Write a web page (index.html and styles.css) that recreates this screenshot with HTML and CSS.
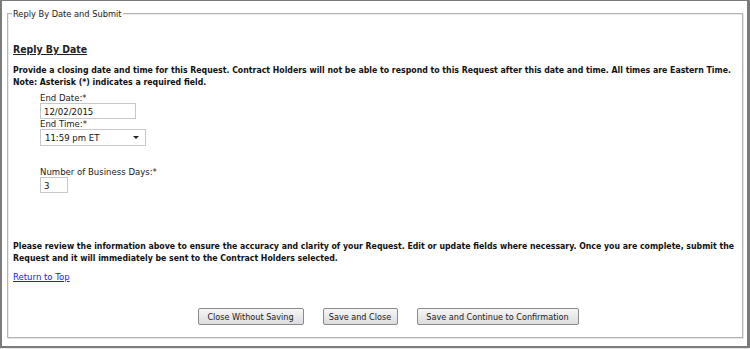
FILE: index.html
```html
<!DOCTYPE html>
<html lang="en">
<head>
    <meta charset="UTF-8">
    <title>Reply By Date and Submit</title>
    <link rel="stylesheet" href="styles.css">
</head>
<body>
    <div class="frame">
        <fieldset class="section">
            <legend>Reply By Date and Submit</legend>

            <h2 class="section-title">Reply By Date</h2>
            <p class="note">Provide a closing date and time for this Request. Contract Holders will not be able to respond to this Request after this date and time. All times are Eastern Time.<br>Note: Asterisk (*) indicates a required field.</p>

            <div class="fields">
                <div class="field">
                    <label for="endDate">End Date:*</label>
                    <input type="text" id="endDate" class="date-input" value="12/02/2015">
                </div>
                <div class="field">
                    <label for="endTime">End Time:*</label>
                    <div class="select-box" id="endTime">
                        <span>11:59 pm ET</span>
                        <span class="arrow"></span>
                    </div>
                </div>
                <div class="field days">
                    <label for="days">Number of Business Days:*</label>
                    <input type="text" id="days" class="days-input" value="3">
                </div>
            </div>

            <p class="note review">Please review the information above to ensure the accuracy and clarity of your Request. Edit or update fields where necessary. Once you are complete, submit the Request and it will immediately be sent to the Contract Holders selected.</p>

            <a href="#" class="top-link">Return to Top</a>

            <div class="actions">
                <button type="button" class="btn-close">Close Without Saving</button>
                <button type="button" class="btn-save">Save and Close</button>
                <button type="button" class="btn-continue">Save and Continue to Confirmation</button>
            </div>
        </fieldset>
    </div>
</body>
</html>
```

FILE: styles.css
```css
html, body {
    margin: 0;
    padding: 0;
    background-color: #e8e8e8;
}
body {
    font-family: "DejaVu Sans Condensed", "DejaVu Sans", Verdana, sans-serif;
    font-size: 9.5px;
    color: #111;
}
.frame {
    width: 750px;
    height: 348px;
    box-sizing: border-box;
    border-style: solid;
    border-color: #7b7b7b;
    border-width: 1px 3px 2px 2px;
    background-color: white;
    padding: 7px 4px 0 5px;
}
.section {
    margin: 0;
    height: 330px;
    box-sizing: border-box;
    border: 1px solid #b4b4b4;
    box-shadow: 1px 1px 0 #e4e4e4, inset 1px 1px 0 #ececec;
    padding: 24px 5px 0 5px;
}
.section legend {
    padding: 0 1px;
    margin-left: -1px;
    font-size: 9.2px;
    color: #222;
}
.section-title {
    margin: 0 0 9px 0;
    font-size: 10.4px;
    font-weight: bold;
    text-decoration: underline;
    color: #222;
}
.note {
    margin: 0;
    font-weight: bold;
    font-size: 8.7px;
    line-height: 12px;
}
.fields {
    padding: 5px 0 47px 27px;
}
.field label {
    display: block;
    line-height: 10px;
    color: #222;
}
.field input {
    font-family: inherit;
    font-size: 9.5px;
    color: #111;
    border: 1px solid #c8c8c8;
    box-sizing: border-box;
    height: 16px;
    padding: 0 3px;
    margin: 0;
    display: block;
}
.date-input {
    width: 96px;
}
.days-input {
    width: 28px;
}
.select-box {
    width: 106px;
    height: 17px;
    box-sizing: border-box;
    border: 1px solid #c8c8c8;
    display: flex;
    align-items: center;
    justify-content: space-between;
    padding: 0 6px 0 4px;
    color: #111;
}
.select-box .arrow {
    width: 0;
    height: 0;
    border-left: 3px solid transparent;
    border-right: 3px solid transparent;
    border-top: 3px solid #222;
}
.field.days {
    margin-top: 21px;
}
.top-link {
    display: inline-block;
    margin-top: 7px;
    color: #1a1aff;
    text-decoration: underline;
}
.actions {
    display: flex;
    justify-content: center;
    gap: 19px;
    margin-top: 26px;
    padding-left: 26px;
}
.actions button {
    font-family: inherit;
    font-size: 9px;
    color: #222;
    height: 17px;
    padding: 0;
    white-space: nowrap;
    border: 1px solid #8a8a8a;
    border-radius: 2px;
    background: linear-gradient(#f6f6f6, #dcdcdc);
    cursor: pointer;
}
.btn-close {
    width: 106px;
}
.btn-save {
    width: 75px;
}
.btn-continue {
    width: 162px;
}
```
